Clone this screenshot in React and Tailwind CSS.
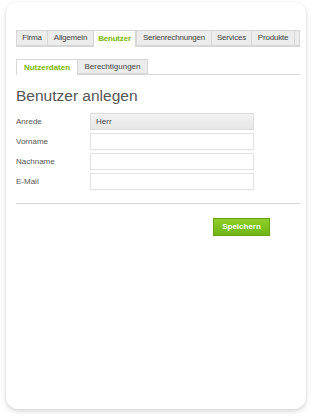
import React from "react";

const tabs = [
  { t: "Firma", w: "w-[31px]" },
  { t: "Allgemein", w: "w-[46px]" },
  { t: "Benutzer", w: "w-[43px]", active: true },
  { t: "Serienrechnungen", w: "w-[75px]" },
  { t: "Services", w: "w-[40px]" },
  { t: "Produkte", w: "w-[43px]" },
];
const fields = [
  { label: "Anrede", value: "Herr", select: true },
  { label: "Vorname" },
  { label: "Nachname" },
  { label: "E-Mail" },
];

export default function App() {
  return (
    <div className="h-[418px] w-[312px] bg-white pl-[6px] pr-[6px] pt-[2px] pb-[9px]" style={{ fontFamily: '"Liberation Sans", Arial, sans-serif' }}>
      <div className="flex h-full flex-col rounded-[12px] bg-white px-[10px] pt-[28px] shadow-[0_2px_5px_rgba(0,0,0,0.18)]">
        <div className="mr-[-4px] flex h-[17px] border-b border-[#d6d6d6]">
          {tabs.map((x) => (
            <div
              key={x.t}
              className={
                x.active
                  ? `${x.w} mb-[-1px] flex items-center justify-center border border-b-0 border-[#d6d6d6] bg-white text-[8px] font-bold tracking-[-0.2px] text-[#7ab800]`
                  : `${x.w} flex items-center justify-center border border-r-0 border-[#d6d6d6] bg-[#ececec] text-[8px] tracking-[-0.2px] text-[#444]`
              }
            >
              {x.t}
            </div>
          ))}
          <div className="w-[6px] border border-[#d6d6d6] bg-[#ececec]" />
        </div>

        <div className="mr-[-4px] mt-[12px] flex h-[16px] border-b border-[#d6d6d6]">
          <div className="mb-[-1px] flex w-[62px] items-center justify-center border border-b-0 border-[#d6d6d6] bg-white text-[8px] font-bold text-[#7ab800]">
            Nutzerdaten
          </div>
          <div className="flex w-[70px] items-center justify-center border border-l-0 border-[#d6d6d6] bg-[#ececec] text-[8px] text-[#444]">
            Berechtigungen
          </div>
        </div>

        <h1 className="mt-[11px] text-[15.5px] leading-[20px] text-[#555]">Benutzer anlegen</h1>

        <div className="mt-[7px] flex flex-col gap-[3px] pr-[42px]">
          {fields.map((f) => (
            <div key={f.label} className="flex items-center">
              <span className="w-[74px] text-[8px] text-[#555]">{f.label}</span>
              <div
                className={
                  f.select
                    ? "flex h-[17px] flex-1 items-center border border-[#dcdcdc] bg-gradient-to-b from-[#f3f3f3] to-[#e6e6e6] px-[5px] text-[8px] text-[#444]"
                    : "h-[17px] flex-1 border border-[#e2e2e2] bg-white"
                }
              >
                {f.value}
              </div>
            </div>
          ))}
        </div>

        <div className="mr-[-4px] mt-[13px] border-t border-[#d6d6d6]" />

        <div className="mt-[14px] flex justify-end pr-[26px]">
          <button className="h-[18px] w-[57px] border border-[#6aa20f] bg-gradient-to-b from-[#8fcf2a] to-[#6fb514] text-[8px] font-bold text-white">
            Speichern
          </button>
        </div>
      </div>
    </div>
  );
}
